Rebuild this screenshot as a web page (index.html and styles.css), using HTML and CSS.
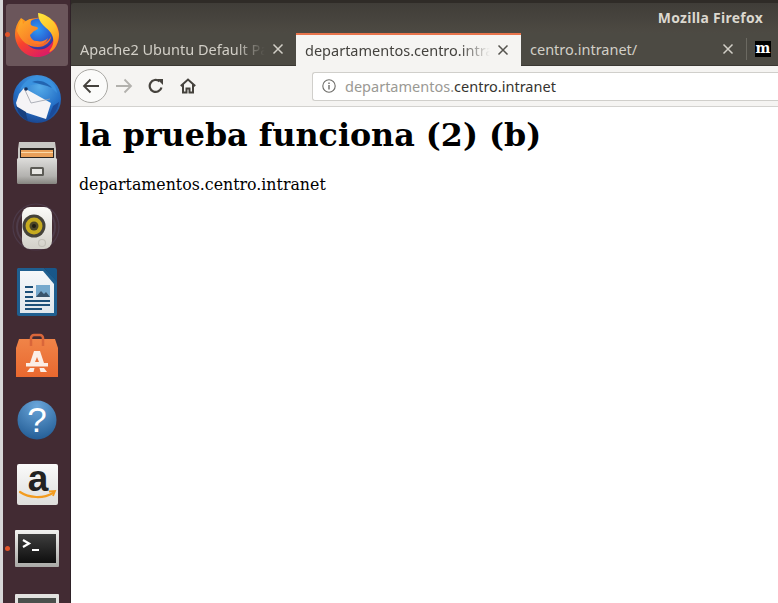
FILE: index.html
```html
<!DOCTYPE html>
<html lang="es">
<head>
<meta charset="utf-8">
<title>Mozilla Firefox</title>
<link rel="stylesheet" href="styles.css">
</head>
<body>
<div class="desktop">
  <aside class="launcher">
    <div class="slot active"><span class="dot"></span>
      <svg class="ico" width="48" height="48" viewBox="0 0 48 48">
        <defs>
          <linearGradient id="ffo" x1="0.1" y1="0.1" x2="0.7" y2="1"><stop offset="0" stop-color="#ff9f1c"/><stop offset="0.45" stop-color="#f8442c"/><stop offset="1" stop-color="#d9186a"/></linearGradient>
          <linearGradient id="ffy" x1="0" y1="0" x2="0.5" y2="1"><stop offset="0" stop-color="#ffe83e"/><stop offset=".6" stop-color="#ffc12a"/><stop offset="1" stop-color="#ff8a1e"/></linearGradient>
          <radialGradient id="ffb" cx="0.45" cy="0.35" r="0.7"><stop offset="0" stop-color="#2f9bf5"/><stop offset=".6" stop-color="#2a5fd0"/><stop offset="1" stop-color="#3a2a90"/></radialGradient>
          <linearGradient id="ffh" x1="0" y1="0" x2="1" y2="1"><stop offset="0" stop-color="#ffb32a"/><stop offset="1" stop-color="#f45a26"/></linearGradient>
        </defs>
        <path d="M8 7c-4 5-6 10-6 16 0 13 10 23 22 23 13 0 22-10 22-22 0-5-2-10-4-13L30 6 17 8 14 11z" fill="url(#ffo)"/>
        <circle cx="26" cy="23" r="15.500" fill="url(#ffb)"/>
        <path d="M25 2c9 1 20 9 21 21 0 6-2 12-6 16-4 3-4 2-3 0 3-4 4-8 3-12-1-6-6-9-10-13-3-3-5-7-5-12z" fill="url(#ffy)"/>
        <path d="M4 20c1-5 3-9 5-12l1 5c2-3 5-5 9-5-1 2-2 4-1 6 2 2 6 1 7 3 0 2-3 2-5 4l-3 3c1 5 7 9 13 8 4-1 7-4 8-7 0 6-6 11-13 11C14 36 8 30 4 20z" fill="url(#ffh)"/>
        <path d="M14 27c3 5 8 7 14 6 4-1 6-3 7-6-3 3-7 4-11 3-4 0-7-1-10-3z" fill="#ff7a2a"/>
      </svg>
    </div>
    <div class="slot">
      <svg class="ico" width="50" height="50" viewBox="0 0 50 50">
        <defs>
          <radialGradient id="tb" cx="0.55" cy="0.25" r="0.85"><stop offset="0" stop-color="#56ace9"/><stop offset="0.55" stop-color="#2571c8"/><stop offset="1" stop-color="#173a80"/></radialGradient>
        </defs>
        <circle cx="25" cy="25" r="24" fill="url(#tb)"/>
        <path d="M8 16C12 6 22 1 31 3c8 2 13 9 14 16-5-6-12-9-19-9-6 0-12 2-18 6z" fill="#3a92df"/>
        <path d="M20 8c7-3 15 0 20 6-6-3-13-4-20-6z" fill="#0f3f8a" opacity=".55"/>
        <path d="M7 20 12 14 39 29 34 45 6 36 4 29z" fill="#f5f4f6"/>
        <path d="M12 14 19 29 38 25" fill="none" stroke="#9ca0aa" stroke-width=".8"/>
        <circle cx="14" cy="15" r="1.800" fill="#12305f"/>
        <path d="M4 32c2 7 6 12 12 15-1-3-2-6-2-9z" fill="#17407f"/>
        <path d="M36 45c6-4 10-10 11-17l-6 4z" fill="#1b4b9a"/>
      </svg>
    </div>
    <div class="slot">
      <svg class="ico" width="44" height="46" viewBox="0 0 44 46">
        <defs>
          <linearGradient id="fc" x1="0" y1="0" x2="0" y2="1"><stop offset="0" stop-color="#dedddb"/><stop offset=".7" stop-color="#b3b2af"/><stop offset="1" stop-color="#85847f"/></linearGradient>
        </defs>
        <path d="M4 2h36l1 7v10H3V9z" fill="#c8c7c4"/>
        <rect x="5" y="8" width="34" height="11" fill="#2a2522"/>
        <rect x="6" y="10" width="32" height="7" fill="#e9a05a"/>
        <rect x="6" y="12" width="32" height="1" fill="#fbd9a8"/>
        <rect x="2" y="18" width="40" height="26" rx="1.500" fill="url(#fc)"/>
        <rect x="15" y="27" width="14" height="9" rx="1.500" fill="#5c5b56"/>
        <rect x="17" y="29" width="10" height="5" fill="#e8e7e4"/>
      </svg>
    </div>
    <div class="slot">
      <svg class="ico" width="50" height="50" viewBox="0 0 50 50">
        <defs>
          <linearGradient id="rb" x1="0" y1="0" x2="0" y2="1"><stop offset="0" stop-color="#fbfbf8"/><stop offset="1" stop-color="#d2d0c8"/></linearGradient>
        </defs>
        <circle cx="24" cy="24" r="23" fill="none" stroke="#4c3a49" stroke-width="1.200"/>
        <circle cx="24" cy="24" r="19" fill="none" stroke="#4e3c4a" stroke-width="2"/>
        <rect x="10" y="4" width="30" height="42" rx="8" fill="url(#rb)"/>
        <circle cx="22" cy="23" r="11.500" fill="#45433a"/>
        <circle cx="22" cy="23" r="8.500" fill="#c6ab1f"/>
        <circle cx="22" cy="23" r="4.500" fill="#4b4526"/>
        <circle cx="22" cy="23" r="2" fill="#1e1c12"/>
        <circle cx="30" cy="40" r="3.500" fill="none" stroke="#c2c0b8" stroke-width="1.200"/>
      </svg>
    </div>
    <div class="slot">
      <svg class="ico" width="42" height="50" viewBox="0 0 42 50">
        <defs>
          <linearGradient id="wp" x1="0" y1="0" x2="0" y2="1"><stop offset="0" stop-color="#f6f8fa"/><stop offset="1" stop-color="#dfe6ec"/></linearGradient>
        </defs>
        <path d="M2 1h26l13 13v33a2 2 0 0 1-2 2H3a2 2 0 0 1-2-2V2z" fill="#1f5f90"/>
        <path d="M4 4h23l11 13v29H4z" fill="url(#wp)"/>
        <path d="M28 1h11a2 2 0 0 1 2 2v12z" fill="#18578a"/>
        <rect x="9" y="19" width="8" height="2" fill="#1c4f78"/>
        <rect x="9" y="24" width="8" height="2" fill="#1c4f78"/>
        <rect x="9" y="29" width="8" height="2" fill="#1c4f78"/>
        <rect x="20" y="18" width="14" height="12" fill="#76a9cd"/>
        <path d="M20 30l5-6 3 3 2-2 4 5z" fill="#3a556c"/>
        <rect x="9" y="33" width="25" height="2" fill="#1c4f78"/>
        <rect x="9" y="37" width="25" height="2" fill="#1c4f78"/>
        <rect x="9" y="41" width="17" height="2" fill="#1c4f78"/>
      </svg>
    </div>
    <div class="slot">
      <svg class="ico" width="44" height="46" viewBox="0 0 44 46">
        <defs>
          <linearGradient id="sw" x1="0" y1="0" x2="0" y2="1"><stop offset="0" stop-color="#f08448"/><stop offset="1" stop-color="#e9682f"/></linearGradient>
        </defs>
        <path d="M1 44V15L4 6h36l3 9v29z" fill="url(#sw)"/>
        <path d="M16 13V5a3 3 0 0 1 3-3h6a3 3 0 0 1 3 3v8" fill="none" stroke="#d9663a" stroke-width="2.500"/>
        <path d="M19 18h6l4 12H15zm3 6-2 5h4z" fill="#fbeee6" fill-rule="evenodd"/>
        <rect x="11" y="30" width="22" height="3.500" fill="#fbeee6"/>
        <path d="M15 35h4.500l-1 4H12zM24.500 35H29l3 4h-6.500z" fill="#fbeee6"/>
      </svg>
    </div>
    <div class="slot">
      <svg class="ico" width="40" height="40" viewBox="0 0 40 40">
        <defs>
          <radialGradient id="hp" cx="0.5" cy="0.15" r="0.95"><stop offset="0" stop-color="#6aa6da"/><stop offset="1" stop-color="#1d568f"/></radialGradient>
        </defs>
        <circle cx="20" cy="20" r="19.500" fill="url(#hp)"/>
        <text x="20" y="32" class="qmark">?</text>
      </svg>
    </div>
    <div class="slot">
      <svg class="ico" width="41" height="41" viewBox="0 0 41 41">
        <defs>
          <linearGradient id="am" x1="0" y1="0" x2="0" y2="1"><stop offset="0" stop-color="#fafafa"/><stop offset="1" stop-color="#dededc"/></linearGradient>
        </defs>
        <rect width="41" height="41" rx="2" fill="url(#am)"/>
        <text x="21" y="27" class="amz">a</text>
        <path d="M3 28c9 6 23 7 33 1" fill="none" stroke="#f39c1f" stroke-width="2.200" stroke-linecap="round"/>
        <path d="M32 27.500l6-.5-2 5" fill="none" stroke="#f39c1f" stroke-width="1.800"/>
      </svg>
    </div>
    <div class="slot"><span class="dot"></span>
      <svg class="ico" width="44" height="37" viewBox="0 0 44 37">
        <defs>
          <linearGradient id="tm" x1="0" y1="0" x2="0" y2="1"><stop offset="0" stop-color="#3e3e3e"/><stop offset="1" stop-color="#0e0e0e"/></linearGradient>
          <linearGradient id="tf" x1="0" y1="0" x2="0" y2="1"><stop offset="0" stop-color="#f2f2f0"/><stop offset="1" stop-color="#a9a9a6"/></linearGradient>
        </defs>
        <rect width="44" height="37" rx="1" fill="url(#tf)"/>
        <rect x="3" y="4" width="38" height="29" fill="url(#tm)"/>
        <path d="M8 10l6 3.500-6 3.500" fill="none" stroke="#fff" stroke-width="2.200"/>
        <rect x="17" y="19" width="7" height="2" fill="#fff"/>
      </svg>
    </div>
    <div class="slot">
      <svg class="ico" width="44" height="37" viewBox="0 0 44 37">
        <rect width="44" height="37" rx="1" fill="#e2e2e0"/>
        <rect x="3" y="4" width="38" height="29" fill="#4a4f4c"/>
      </svg>
    </div>
  </aside>
  <main class="window">
    <header class="titlebar"><span class="title">Mozilla Firefox</span></header>
    <nav class="tabs">
      <div class="tab"><span class="tab-label">Apache2 Ubuntu Default Page</span>
        <svg class="close" width="12" height="12" viewBox="0 0 12 12"><path d="M1.500 1.500l9 9m0-9l-9 9"/></svg></div>
      <div class="tab selected"><span class="tab-label">departamentos.centro.intranet</span>
        <svg class="close" width="12" height="12" viewBox="0 0 12 12"><path d="M1.500 1.500l9 9m0-9l-9 9"/></svg></div>
      <div class="tab"><span class="tab-label">centro.intranet/</span>
        <svg class="close" width="12" height="12" viewBox="0 0 12 12"><path d="M1.500 1.500l9 9m0-9l-9 9"/></svg></div>
      <div class="tab-end"><span class="m-icon">m</span></div>
    </nav>
    <div class="toolbar">
      <button class="back" type="button"><svg width="18" height="18" viewBox="0 0 18 18"><path d="M17 9H2M8.500 2.500 2 9l6.500 6.500" fill="none" stroke="#45423d" stroke-width="1.800"/></svg></button>
      <svg class="tool forward" width="18" height="18" viewBox="0 0 18 18"><path d="M1 9h15M9.500 2.500 16 9l-6.500 6.500" fill="none" stroke="#b2b1ad" stroke-width="1.800"/></svg>
      <svg class="tool reload" width="16" height="16" viewBox="0 0 16 16"><path d="M13.500 9.500A6 6 0 1 1 11.500 3.300" fill="none" stroke="#45423d" stroke-width="2.200"/><path d="M9 1h6v6z" fill="#45423d"/></svg>
      <svg class="tool home" width="16" height="16" viewBox="0 0 16 16"><path d="M.8 8 8 1.500 15.200 8M3 6.500V14.500h3.500v-4h3v4H13V6.500" fill="none" stroke="#45423d" stroke-width="2"/></svg>
      <div class="urlbar">
        <svg class="info" width="14" height="14" viewBox="0 0 14 14"><circle cx="7" cy="7" r="6.200" fill="none" stroke="#6d6c68" stroke-width="1.100"/><rect x="6.300" y="6" width="1.400" height="4.500" fill="#6d6c68"/><rect x="6.300" y="3.500" width="1.400" height="1.500" fill="#6d6c68"/></svg>
        <span class="url"><span class="sub">departamentos.</span>centro.intranet</span>
      </div>
    </div>
    <article class="page">
      <h1>la prueba funciona (2) (b)</h1>
      <p>departamentos.centro.intranet</p>
    </article>
  </main>
</div>
</body>
</html>
```
FILE: styles.css
```css
* { box-sizing: border-box; }
html, body { margin: 0; padding: 0; width: 778px; height: 603px; overflow: hidden; }
.desktop { display: flex; width: 778px; height: 603px; background: #3d2a33; }

.launcher {
  width: 71px; height: 603px; flex: none; overflow: hidden;
  padding: 4px 2px 0 3px; background: #422b33;
  border-left: 3px solid #d7d7d8; border-right: 1px solid #2f2228;
  display: flex; flex-direction: column; gap: 2.2px;
}
.slot {
  position: relative; flex: none; width: 62px; height: 62px;
  display: flex; align-items: center; justify-content: center;
  border-radius: 3px;
}
.slot.active { background: #6b565b; }
.dot {
  position: absolute; left: -1px; top: 50%; width: 5px; height: 5px; margin-top: -3px;
  border-radius: 50%; background: #e2542a;
}
.ico { display: block; flex: none; }
.qmark { font: 35px "Liberation Sans", sans-serif; fill: #fff; text-anchor: middle; }
.amz { font: bold 37px "Liberation Sans", sans-serif; fill: #222; text-anchor: middle; }

.window { flex: 1; display: flex; flex-direction: column; height: 603px; padding-top: 3px; min-width: 0; background: #2f2b27; }
.titlebar {
  height: 30px; flex: none; display: flex; align-items: center; justify-content: flex-end;
  padding: 0 15px 2px 0; background: linear-gradient(#403d38, #4d4a43);
  border-radius: 3px 0 0 0;
}
.title { font: bold 13.9px "Noto Sans", sans-serif; color: #dcd8cf; letter-spacing: .3px; }

.tabs { height: 33px; flex: none; display: flex; background: #4c4a43; border-bottom: 1px solid #3a3833; }
.tab {
  width: 225px; flex: none; display: flex; align-items: center; gap: 7px;
  padding: 0 12px 0 9px; color: #d2cfc7;
  font: 14.5px "Noto Sans", sans-serif;
}
.tab-label {
  flex: 1; min-width: 0; overflow: hidden; white-space: nowrap;
  -webkit-mask-image: linear-gradient(to right, #000 84%, transparent 100%);
  mask-image: linear-gradient(to right, #000 84%, transparent 100%);
}
.tab.selected {
  background: #f5f4f2; color: #45433f; height: 33px;
  border-top: 2px solid #e8744c;
  padding-bottom: 2px;
}
.tab:nth-child(3) .tab-label { -webkit-mask-image: none; mask-image: none; }
.close { flex: none; fill: none; stroke: #d2cfc7; stroke-width: 1.500; }
.selected .close { stroke: #55534e; }
.tab-end { flex: 1; display: flex; align-items: center; padding-left: 9px; position: relative; }
.tab-end::before { content: ""; position: absolute; left: 0; top: 5px; bottom: 5px; width: 1px; background: #6b6961; }
.m-icon {
  width: 16px; height: 16px; background: #000; color: #fff;
  font: bold 14px/14px "DejaVu Serif", serif; text-align: center; display: block; overflow: hidden;
}

.toolbar {
  height: 41px; flex: none; display: flex; align-items: center;
  background: #f5f4f2; border-bottom: 1px solid #d3d2cf;
  padding-left: 3px;
}
.back {
  width: 34px; height: 34px; border-radius: 50%; flex: none; margin: 0; padding: 0;
  background: #fbfbfa; border: 1px solid #a8a7a3;
  display: flex; align-items: center; justify-content: center;
}
.tool { flex: none; display: block; }
.forward { margin-left: 7px; }
.reload { margin-left: 15px; }
.home { margin-left: 16px; }
.urlbar {
  margin-left: 116px; width: 480px; height: 29px; flex: none;
  display: flex; align-items: center; gap: 9px; padding-left: 9px;
  background: #fff; border: 1px solid #d0cfcb; border-right: 0; border-radius: 3px 0 0 3px;
}
.info { flex: none; }
.url { font: 14.5px "Noto Sans", sans-serif; color: #36342f; white-space: nowrap; }
.sub { color: #9a9994; }

.page { flex: 1; background: #fff; padding: 0 8px; color: #000; }
.page h1 { font: bold 31.75px/37px "DejaVu Serif", serif; margin: 9px 0 0; }
.page p { font: 15.8px/19px "DejaVu Serif", serif; margin: 22px 0 0; }
```
